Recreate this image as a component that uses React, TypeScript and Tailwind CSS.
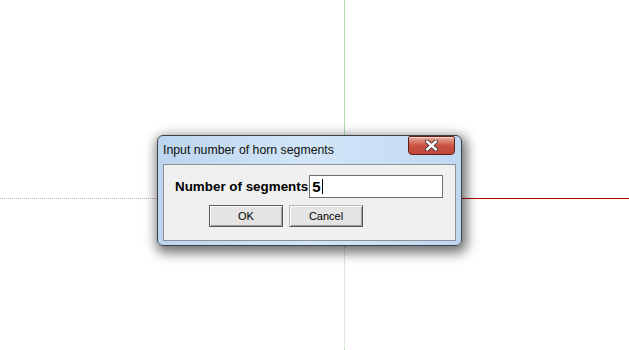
import React from "react";

function CloseX() {
  return (
    <svg width="13" height="11" viewBox="0 0 13 11">
      <path d="M2 1.5 L11 9.5 M11 1.5 L2 9.5" stroke="#3a2a2a" strokeWidth="4.2" strokeLinecap="round" />
      <path d="M2 1.5 L11 9.5 M11 1.5 L2 9.5" stroke="#ffffff" strokeWidth="2.4" strokeLinecap="round" />
    </svg>
  );
}

export default function App() {
  return (
    <div className="relative w-[629px] h-[350px] bg-white overflow-hidden" style={{ fontFamily: '"Liberation Sans", Arial, sans-serif' }}>
      {/* guide lines on canvas */}
      <div className="absolute left-[344px] top-0 h-[135px] w-px bg-[#b4d9b4]" />
      <div className="absolute left-[344px] top-[246px] bottom-0 border-l border-dotted border-[#b4d9b4]" />
      <div className="absolute left-[462px] top-[198px] right-0 h-px bg-[#b00000]" />
      <div className="absolute left-0 top-[198px] w-[157px] border-t border-dotted border-[#c9aab4]" />

      {/* dialog window */}
      <div className="absolute left-[157px] top-[135px] w-[305px] h-[111px] rounded-[6px] border border-[#3b4048] bg-gradient-to-r from-[#bcd5ee] via-[#d2e6f8] to-[#bfd8f1] shadow-[2px_4px_12px_3px_rgba(0,0,0,0.55)] flex flex-col">
        <div className="h-[28px] flex justify-between pl-[5px]">
          <span className="self-center text-[12.3px] text-[#111] pt-[1px]">
            Input number of horn segments
          </span>
          <div className="w-[47px] h-[19px] mr-[6px] rounded-b-[4px] rounded-t-[2px] border border-[#5e2019] bg-gradient-to-b from-[#e9aea2] via-[#c8533f] to-[#c2473a] flex items-center justify-center shadow-[inset_0_1px_0_rgba(255,255,255,0.5)]">
            <CloseX />
          </div>
        </div>
        <div className="mx-[5px] h-[77px] bg-[#f0f0f0] border border-[#8d9196] pl-[11px] pt-[10px] flex flex-col">
          <div className="flex items-center">
            <span className="text-[13.4px] font-bold text-black leading-none">Number of segments</span>
            <div className="ml-px w-[134px] h-[23px] bg-white border border-[#6f6f6f] flex items-center pl-[2px]">
              <span className="text-[15px] font-bold leading-none text-black">5</span>
              <span className="ml-[1px] w-px h-[15px] bg-black" />
            </div>
          </div>
          <div className="flex gap-[6px] mt-[7px] pl-[34px]">
            <div className="w-[74px] h-[22px] bg-[#e4e4e4] border border-[#5a5a5a] shadow-[inset_1px_1px_0_#ffffff,inset_-1px_-1px_0_#9c9c9c] flex items-center justify-center text-[11px] text-black">
              OK
            </div>
            <div className="w-[74px] h-[22px] bg-[#e4e4e4] border border-t-[#b8b8b8] border-l-[#b8b8b8] border-r-[#5a5a5a] border-b-[#5a5a5a] shadow-[inset_1px_1px_0_#ffffff,inset_-1px_-1px_0_#9c9c9c] flex items-center justify-center text-[11px] text-black">
              Cancel
            </div>
          </div>
        </div>
      </div>
    </div>
  );
}
